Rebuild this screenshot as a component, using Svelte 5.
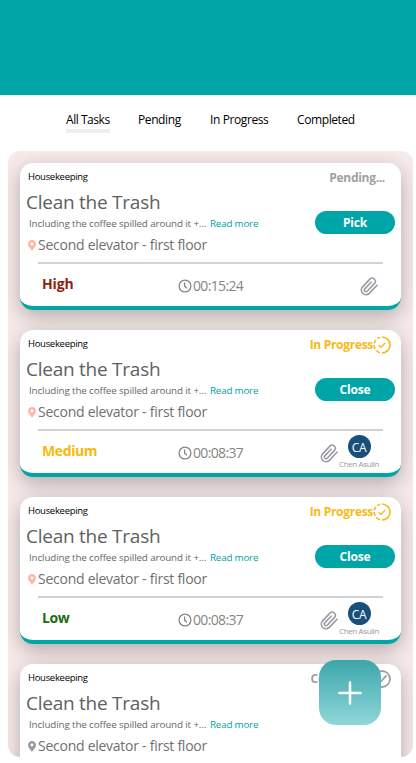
<script>
  const tabs = ['All Tasks', 'Pending', 'In Progress', 'Completed'];
  const tasks = [
    { status: 'Pending...', tone: 'gray', action: 'Pick', priority: 'High', color: '#8f1d0c', time: '00:15:24' },
    { status: 'In Progress', tone: 'amber', action: 'Close', priority: 'Medium', color: '#f7b90c', time: '00:08:37', person: 'Chen Asulin', initials: 'CA' },
    { status: 'In Progress', tone: 'amber', action: 'Close', priority: 'Low', color: '#1f6b12', time: '00:08:37', person: 'Chen Asulin', initials: 'CA' },
    { status: 'Completed', tone: 'gray', done: true }
  ];
</script>

<div class="app">
  <header></header>
  <nav>
    {#each tabs as tab, i}
      <button class="tab t{i}" class:active={i === 0}>{tab}</button>
    {/each}
  </nav>
  <main>
    {#each tasks as task}
      <article>
        <div class="top">
          <div class="info">
            <div class="kind">Housekeeping</div>
            <h2>Clean the Trash</h2>
            <p class="desc"><span>Including the coffee spilled around it +...</span><a href="#more">Read more</a></p>
            <div class="place">
              <svg class="pin" class:muted={task.done} width="8" height="11" viewBox="0 0 8 11"><path fill-rule="evenodd" d="M4 0C1.7 0 0 1.7 0 4c0 2.8 2.5 4.200 4 7 1.500-2.800 4-4.200 4-7 0-2.300-1.700-4-4-4Zm0 2.500a1.450 1.450 0 1 1 0 2.900 1.450 1.450 0 0 1 0-2.900Z" /></svg>
              <span>Second elevator - first floor</span>
            </div>
          </div>
          <div class="side">
            <div class="status {task.tone}" class:icon={task.tone === 'amber' || task.done}>
              <span>{task.status}</span>
              {#if task.tone === 'amber'}
                <svg width="18" height="18" viewBox="0 0 18 18" fill="none" stroke="currentColor" stroke-width="1.600"><path d="M9 1a8 8 0 0 1 0 16" /><path d="M7.200 1.200a8 8 0 0 0-3 1.500M2.900 4a8 8 0 0 0-1.700 3.200M1 9a8 8 0 0 0 1.200 3.900M3.300 14.500a8 8 0 0 0 3.800 2.200" /><path d="m5.700 9.200 2.200 2.100 4.300-4.300" stroke-width="1.300" /></svg>
              {:else if task.done}
                <svg width="18" height="18" viewBox="0 0 18 18" fill="none" stroke="currentColor" stroke-width="1.800"><circle cx="9" cy="9" r="8" /><path d="m5 10 2.300 2.300 6.200-7" /></svg>
              {/if}
            </div>
            {#if task.action}<button class="act">{task.action}</button>{/if}
          </div>
        </div>
        {#if task.priority}
          <hr />
          <footer>
            <strong class={task.priority.toLowerCase()} style:color={task.color}>{task.priority}</strong>
            <div class="time">
              <svg width="14" height="14" viewBox="0 0 14 14" fill="none" stroke="#858585" stroke-width="1.300"><circle cx="7" cy="7" r="5.900" /><path d="M6.600 3.400v3.800l2.300 2.100" /></svg>
              <span>{task.time}</span>
            </div>
            <div class="extras" class:assigned={task.person}>
              <svg class="clip" width="18" height="19" viewBox="0 0 18 19" fill="none" stroke="#9a9ba5" stroke-width="1.600" stroke-linecap="round" stroke-linejoin="round"><path d="m17 8.200-7.700 8.200a4.600 4.600 0 0 1-6.700-.1 4.700 4.700 0 0 1 0-6.400l7.300-7.800a3.150 3.150 0 0 1 4.600 4.300l-7.300 7.800a1.650 1.650 0 0 1-2.400-2.300l6.300-6.700" /></svg>
              {#if task.person}
                <div class="person">
                  <div class="avatar">{task.initials}</div>
                  <small>{task.person}</small>
                </div>
              {/if}
            </div>
          </footer>
        {/if}
      </article>
    {/each}
  </main>
  <button class="add" aria-label="Add task">
    <svg width="24" height="24" viewBox="0 0 24 24" stroke="#fff" stroke-width="2.500" stroke-linecap="round"><path d="M12 1.400v21.200M1.400 12h21.200" /></svg>
  </button>
</div>

<style>
  :global(body) { margin: 0; background: #fff; }
  .app { height: 763px; overflow: hidden; position: relative; display: flex; flex-direction: column; font-family: "Open Sans", "Noto Sans", sans-serif; }
  .app * { box-sizing: border-box; }
  button { font-family: inherit; border: 0; padding: 0; }
  header { height: 95px; background: #00a5a8; flex: none; }
  nav { height: 56px; flex: none; display: flex; gap: 28px; padding: 16px 0 0 66px; align-items: flex-start; }
  .tab { background: none; color: #000; font-size: 12px; line-height: 18px; height: 22px; white-space: nowrap; text-align: left; letter-spacing: -.4px; width: 44px; padding-bottom: 4px; }
  .t2 { width: 59px; }
  .t3 { width: 59px; }
  .active { border-bottom: 4px solid #efefef; padding-bottom: 0; letter-spacing: -.45px; }
  main { margin: 0 3px 0 8px; height: 606px; flex: none; background: #f7eaea; border-radius: 12px; padding: 12px; overflow: hidden; }
  article { height: 147px; margin-bottom: 20px; border-radius: 13px; background: #fff; border-bottom: 4px solid #00a5a8; box-shadow: 0 6px 20px rgba(0, 0, 0, .28); white-space: nowrap; }
  .top { display: flex; justify-content: space-between; height: 99px; }
  .info { padding-left: 6px; }
  .kind { height: 26px; line-height: 27px; font-size: 9.500px; padding-left: 2px; color: #000; letter-spacing: -.3px; }
  h2 { margin: 0; height: 26px; line-height: 26px; font-size: 19px; font-weight: 400; color: #606060; letter-spacing: -.25px; }
  .desc { margin: 0; height: 18px; line-height: 17px; font-size: 9.800px; color: #666; padding-left: 3px; display: flex; letter-spacing: -.12px; }
  .desc span { width: 181px; }
  a { color: #00a0a3; text-decoration: none; letter-spacing: -.2px; }
  .place { height: 24px; line-height: 24px; display: flex; align-items: center; gap: 2px; padding-left: 2px; font-size: 14px; color: #707070; letter-spacing: -.26px; }
  .pin { fill: #ffb5a8; }
  .pin.muted { fill: #9a9ba0; }
  .side { padding-right: 6px; width: 100px; display: flex; flex-direction: column; align-items: flex-end; }
  .status { height: 29px; display: flex; align-items: center; font-weight: 700; font-size: 12px; padding-right: 10px; letter-spacing: -.3px; }
  .status.icon { padding-right: 4px; }
  .gray { color: #a0a0a2; }
  .amber { color: #f7b916; }
  .act { margin-top: 19px; width: 80px; height: 23px; border-radius: 12px; background: #00a5a8; color: #fff; font-size: 12px; line-height: 23px; font-weight: 700; letter-spacing: -.2px; }
  hr { margin: 0 18px; border: 0; height: 2px; background: #ced2d9; }
  footer { height: 42px; display: grid; grid-template-columns: 158px 100px 1fr; align-items: center; }
  strong { padding: 0 0 2px 22px; font-size: 14px; line-height: 20px; letter-spacing: -.4px; }
  .high { letter-spacing: -.1px; }
  .time { display: flex; align-items: center; gap: 1px; font-size: 14px; line-height: 20px; padding-top: 2px; color: #858585; letter-spacing: -.65px; }
  .extras { display: flex; justify-content: flex-end; align-items: center; padding: 2px 23px 0 0; }
  .extras.assigned { padding-right: 21px; padding-top: 0; height: 42px; }
  .assigned .clip { margin-top: 2px; }
  .person { width: 42px; height: 42px; padding-top: 4px; display: flex; flex-direction: column; align-items: center; }
  .avatar { width: 23px; height: 23px; border-radius: 50%; background: #194f7b; color: #fff; font-size: 12px; line-height: 25px; text-align: center; letter-spacing: -.2px; }
  small { font-size: 8px; line-height: 12px; color: #999; letter-spacing: -.38px; }
  .add { position: absolute; left: 319px; top: 660px; width: 62px; height: 65px; border-radius: 17px; background: linear-gradient(#3da6aa, #8fd7d9); display: flex; align-items: center; justify-content: center; }
</style>
